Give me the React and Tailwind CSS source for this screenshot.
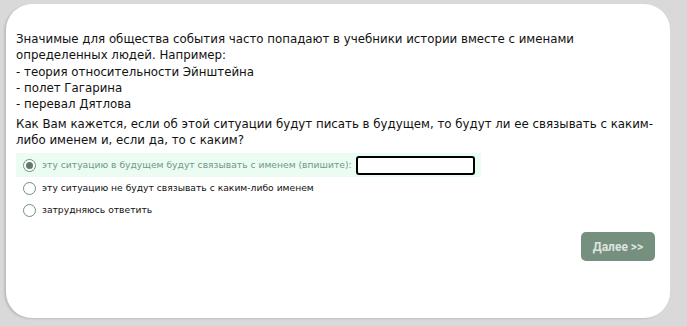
import React, { useState } from 'react';

const options = [
    'эту ситуацию в будущем будут связывать с именем (впишите):',
    'эту ситуацию не будут связывать с каким-либо именем',
    'затрудняюсь ответить',
];

const App = () => {
    const [selected, setSelected] = useState(0);
    const [name, setName] = useState('');

    return (
        <div className="w-[687px] h-[326px] bg-[#d9d9d9] pt-[4px] pl-[6px] pr-[17px] pb-[8px] font-['DejaVu_Sans',sans-serif]">
            <div className="h-full bg-white rounded-[26px] shadow-[-2px_1px_2px_rgba(0,0,0,0.12)] pl-[10px] pr-[14px] pt-[27px] flex flex-col">
                <p className="text-[11.8px] leading-[16.25px] text-[#111]">
                    Значимые для общества события часто попадают в учебники истории вместе с именами
                    <br />
                    определенных людей. Например:
                    <br />- теория относительности Эйнштейна
                    <br />- полет Гагарина
                    <br />- перевал Дятлова
                </p>
                <p className="mt-[4px] text-[11.8px] leading-[16px] text-[#111]">
                    Как Вам кажется, если об этой ситуации будут писать в будущем, то будут ли ее связывать с каким-либо именем и, если да, то с каким?
                </p>
                <div className="mt-[5px] flex flex-col">
                    {options.map((opt, i) => (
                        <label
                            key={opt}
                            onClick={() => setSelected(i)}
                            className={`flex items-center w-fit pl-[7px] pr-[6px] ${i === 0 ? 'h-[24px]' : 'h-[22px]'} ${selected === i ? 'bg-[#ebfcf3]' : ''}`}
                        >
                            <span className="w-[13px] h-[13px] rounded-full border border-[#6f8f7e] bg-white flex items-center justify-center">
                                {selected === i && <span className="w-[7px] h-[7px] rounded-full bg-[#5f7a6c]" />}
                            </span>
                            <span className={`ml-[6px] text-[9.2px] ${selected === i ? 'text-[#6f9a82]' : 'text-[#111]'}`}>{opt}</span>
                            {i === 0 && (
                                <input
                                    type="text"
                                    value={name}
                                    onChange={(e) => setName(e.target.value)}
                                    className="ml-[4px] w-[119px] h-[19px] border-2 border-black rounded-[3px] bg-white outline-none px-[2px] text-[11px]"
                                />
                            )}
                        </label>
                    ))}
                </div>
                <div className="mt-[11px] mr-[1px] flex justify-end">
                    <button className="w-[74px] h-[29px] bg-[#76907f] rounded-[5px] text-[#dde3df] text-[12px] font-bold font-['Roboto',sans-serif]">
                        Далее &gt;&gt;
                    </button>
                </div>
            </div>
        </div>
    );
};

export default App;
